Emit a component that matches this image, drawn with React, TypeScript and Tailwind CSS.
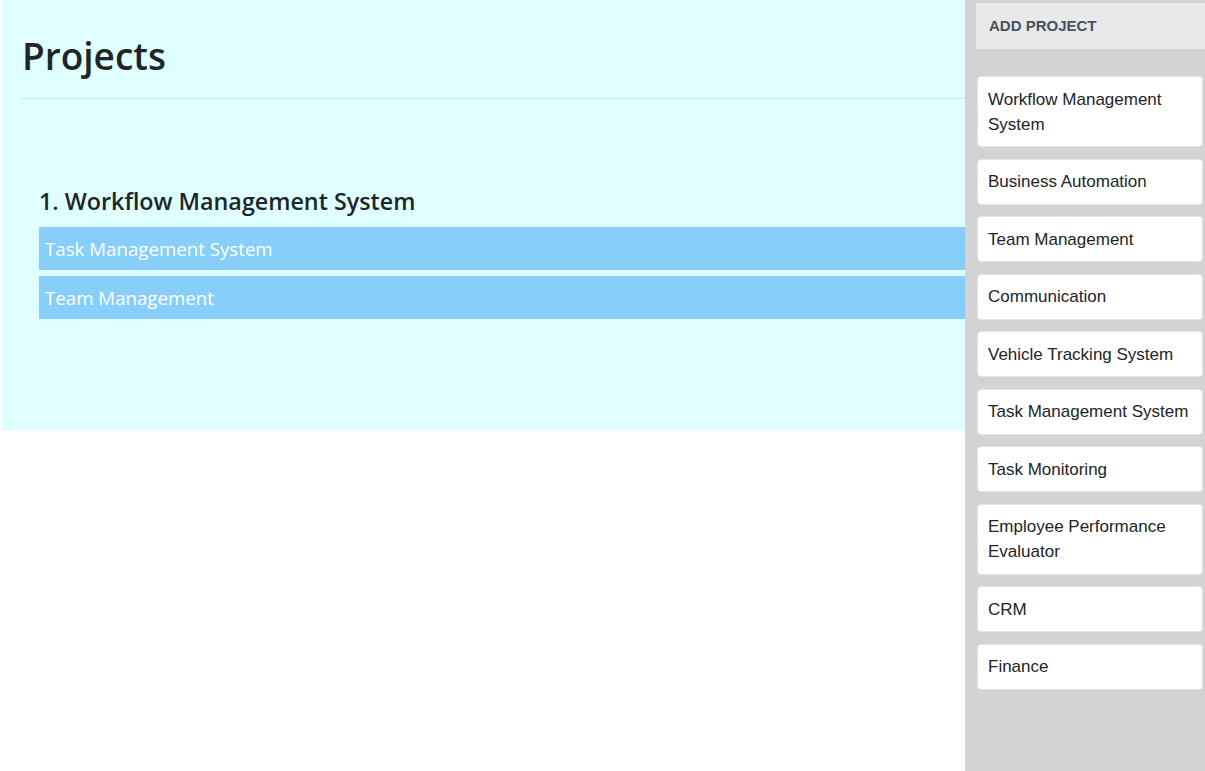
const projects = [
  'Workflow Management System',
  'Business Automation',
  'Team Management',
  'Communication',
  'Vehicle Tracking System',
  'Task Management System',
  'Task Monitoring',
  'Employee Performance Evaluator',
  'CRM',
  'Finance',
];

const modules = ['Task Management System', 'Team Management'];

export default function App() {
  return (
    <div className="flex min-h-[771px] w-full bg-white">
      {/* Main area */}
      <div className="flex-1 self-start ml-[2px]">
        <div className="bg-[#e0ffff] pl-[19px] pt-[32px] pb-[111px] font-['Open_Sans',sans-serif] text-[#212529]">
          <h1 className="text-[37px] leading-[48px] font-semibold mb-[18px] ml-[1px]">Projects</h1>
          <hr className="border-0 border-t border-[#c9e6e6]" />
          <div className="ml-[18px] mt-[88px]">
            <h4 className="text-[23.3px] leading-[29px] font-semibold mb-[11px]">
              1. Workflow Management System
            </h4>
            <div className="flex flex-col gap-[6px]">
              {modules.map((m) => (
                <div
                  key={m}
                  className="bg-[#87cefa] text-white text-[18.7px] leading-[30px] py-[6.5px] px-[6px]"
                >
                  {m}
                </div>
              ))}
            </div>
          </div>
        </div>
      </div>

      {/* Sidebar */}
      <div className="w-[240px] shrink-0 bg-[#d3d3d3] pt-[3px] font-['Liberation_Sans',Arial,sans-serif]">
        <div className="ml-[11px] bg-[#e9e9e9] h-[46px] flex items-center pl-[13px] text-[15px] font-bold text-[#46525e] uppercase">
          Add Project
        </div>
        <div className="flex flex-col gap-[11.5px] mt-[27px] ml-[12px] mr-[2px]">
          {projects.map((p) => (
            <div
              key={p}
              className="bg-white border border-[#e4e4e4] rounded-[4px] py-[9.5px] px-[10px] text-[17px] leading-[25px] text-[#212529]"
            >
              {p}
            </div>
          ))}
        </div>
      </div>
    </div>
  );
}
